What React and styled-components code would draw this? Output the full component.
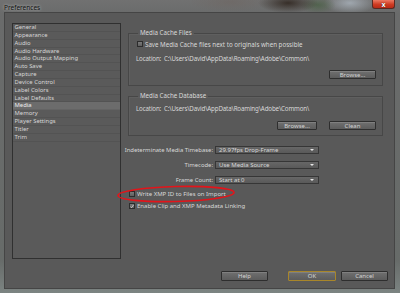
import React from "react";
import styled, { createGlobalStyle } from "styled-components";

const Global = createGlobalStyle`
  html, body { margin: 0; padding: 0; background: #6a6d6c; }
  body { font-family: "Noto Sans", "Open Sans", sans-serif; }
  * { box-sizing: border-box; }
`;

const Window = styled.div`
  position: relative;
  width: 400px;
  height: 293px;
  display: flex;
  flex-direction: column;
  overflow: hidden;
  background:
    radial-gradient(ellipse 30px 10px at 288px 3px, rgba(45, 35, 28, 0.85), transparent),
    radial-gradient(ellipse 18px 9px at 318px 5px, rgba(70, 95, 65, 0.7), transparent),
    radial-gradient(ellipse 26px 11px at 350px 3px, rgba(175, 185, 195, 0.75), transparent),
    radial-gradient(ellipse 40px 10px at 230px 2px, rgba(110, 100, 95, 0.5), transparent),
    linear-gradient(#717171, #6a6b6b 14px, #676b69 260px, #7c8482);
`;

const TitleBar = styled.div`
  height: 12px;
  display: flex;
  justify-content: space-between;
  align-items: flex-start;
  padding: 0 5px 0 4px;
`;

const Title = styled.span`
  font-size: 6.5px;
  line-height: 9px;
  padding-top: 3px;
  color: #111;
  text-shadow: 0 0 3px rgba(255, 255, 255, 0.7);
`;

const CloseButton = styled.div`
  width: 23px;
  height: 9px;
  display: flex;
  align-items: center;
  justify-content: center;
  border: 1px solid #5a2a22;
  border-top: none;
  border-radius: 0 0 3px 3px;
  background: linear-gradient(#ec7a63, #cf3b22 55%, #b82b17);
  color: #fff;
  font-size: 7px;
  font-weight: bold;
  line-height: 1;
  text-shadow: 0 0 1px #000;
`;

const Client = styled.div`
  flex: 1;
  margin: 0 5px 4px 4px;
  background: #595959;
  border: 1px solid #454545;
  padding: 10px 6px 7px 7px;
  display: flex;
  flex-direction: column;
  color: #d8d8d8;
  font-size: 6.2px;
`;

const Body = styled.div`
  height: 236px;
  display: flex;
  gap: 7px;
`;

const Sidebar = styled.div`
  width: 109px;
  height: 100%;
  border: 1px solid #303030;
  background: #5a5a5a;
`;

const Item = styled.div`
  height: 7.85px;
  line-height: 7.85px;
  padding-left: 1.5px;
  font-size: 5.9px;
  white-space: nowrap;
  border-bottom: 1px solid rgba(0, 0, 0, 0.07);
  background: ${(p) => (p.$selected ? "#6c6c6c" : "transparent")};
  color: ${(p) => (p.$selected ? "#eeeeee" : "#d6d6d6")};
`;

const Pane = styled.div`
  width: 255px;
  display: flex;
  flex-direction: column;
`;

const Group = styled.fieldset`
  margin: ${(p) => p.$top}px 0 0 0;
  border: 1px solid #474747;
  box-shadow: inset 1px 1px 0 rgba(255, 255, 255, 0.04);
  padding: ${(p) => p.$pad}px 6px ${(p) => p.$bottom}px 7px;
  min-width: 0;
  display: flex;
  flex-direction: column;
`;

const Legend = styled.legend`
  font-size: 6.2px;
  line-height: 8px;
  padding: 0 2px;
  margin-left: 2px;
  color: #d8d8d8;
`;

const CheckRow = styled.div`
  height: 8px;
  display: flex;
  align-items: center;
  gap: 2px;
  margin-top: ${(p) => p.$top || 0}px;
  margin-left: 1px;
  white-space: nowrap;
`;

const Box = styled.span`
  width: 6px;
  height: 6px;
  flex: none;
  border: 1px solid #2c2c2c;
  background: linear-gradient(#7a7a7a, #5f5f5f);
  display: flex;
  align-items: center;
  justify-content: center;
`;

const TextRow = styled.div`
  height: 8px;
  line-height: 8px;
  margin-top: ${(p) => p.$top}px;
  white-space: nowrap;
  letter-spacing: -0.15px;
`;

const ButtonRow = styled.div`
  display: flex;
  justify-content: flex-end;
  gap: ${(p) => p.$gap || 12}px;
  margin-top: ${(p) => p.$top}px;
`;

const Button = styled.div`
  width: ${(p) => p.$w}px;
  height: ${(p) => p.$h || 9}px;
  display: flex;
  align-items: center;
  justify-content: center;
  border: 1px solid ${(p) => (p.$default ? "#a8862a" : "#2e2e2e")};
  border-radius: 1px;
  background: linear-gradient(#707070, #5c5c5c);
  box-shadow: inset 0 1px 0 rgba(255, 255, 255, 0.12);
  color: #d4d4d4;
  font-size: 6px;
  white-space: nowrap;
`;

const Form = styled.div`
  margin-top: 10px;
  display: grid;
  grid-template-columns: 85px 104px;
  column-gap: 2px;
  row-gap: 7px;
`;

const Label = styled.div`
  height: 8px;
  line-height: 8px;
  display: flex;
  justify-content: flex-end;
  white-space: nowrap;
  font-size: 5.9px;
`;

const Select = styled.div`
  height: 8px;
  display: flex;
  align-items: center;
  justify-content: space-between;
  padding: 0 4px 0 3px;
  border: 1px solid #363636;
  background: linear-gradient(#676767, #595959);
  font-size: 6px;
  white-space: nowrap;
`;

const Arrow = styled.span`
  width: 0;
  height: 0;
  border-left: 2px solid transparent;
  border-right: 2px solid transparent;
  border-top: 2px solid #e8e8e8;
`;

const Checks = styled.div`
  margin-top: 6px;
  display: flex;
  flex-direction: column;
  gap: 4px;
  font-size: 6px;
`;

const Footer = styled.div`
  margin-top: 12px;
  height: 10px;
  display: flex;
  justify-content: flex-end;
`;

const Annotation = styled.svg`
  position: absolute;
  left: 116px;
  top: 185px;
  overflow: visible;
`;

const items = [
  "General",
  "Appearance",
  "Audio",
  "Audio Hardware",
  "Audio Output Mapping",
  "Auto Save",
  "Capture",
  "Device Control",
  "Label Colors",
  "Label Defaults",
  "Media",
  "Memory",
  "Player Settings",
  "Titler",
  "Trim",
];

function Check({ checked }) {
  return (
    <Box>
      {checked && (
        <svg width="5" height="5" viewBox="0 0 5 5">
          <path d="M0.6 2.6 L1.9 4 L4.4 0.6" fill="none" stroke="#e6e6e6" strokeWidth="0.9" />
        </svg>
      )}
    </Box>
  );
}

export default function App() {
  return (
    <Window>
      <Global />
      <TitleBar>
        <Title>Preferences</Title>
        <CloseButton>x</CloseButton>
      </TitleBar>
      <Client>
        <Body>
          <Sidebar>
            {items.map((it) => (
              <Item key={it} $selected={it === "Media"}>
                {it}
              </Item>
            ))}
          </Sidebar>
          <Pane>
            <Group $top={6} $pad={3} $bottom={6}>
              <Legend>Media Cache Files</Legend>
              <CheckRow>
                <Check />
                <span>Save Media Cache files next to originals when possible</span>
              </CheckRow>
              <TextRow $top={7}>Location:&nbsp; C:\Users\David\AppData\Roaming\Adobe\Common\</TextRow>
              <ButtonRow $top={7}>
                <Button $w={47}>Browse...</Button>
              </ButtonRow>
            </Group>
            <Group $top={6} $pad={5} $bottom={5}>
              <Legend>Media Cache Database</Legend>
              <TextRow $top={0}>Location:&nbsp; C:\Users\David\AppData\Roaming\Adobe\Common\</TextRow>
              <ButtonRow $top={8} $gap={12}>
                <Button $w={40}>Browse...</Button>
                <Button $w={47}>Clean</Button>
              </ButtonRow>
            </Group>
            <Form>
              <Label>Indeterminate Media Timebase:</Label>
              <Select>
                <span>29.97fps Drop-Frame</span>
                <Arrow />
              </Select>
              <Label>Timecode:</Label>
              <Select>
                <span>Use Media Source</span>
                <Arrow />
              </Select>
              <Label>Frame Count:</Label>
              <Select>
                <span>Start at 0</span>
                <Arrow />
              </Select>
            </Form>
            <Checks>
              <CheckRow>
                <Check />
                <span>Write XMP ID to Files on Import</span>
              </CheckRow>
              <CheckRow>
                <Check checked />
                <span>Enable Clip and XMP Metadata Linking</span>
              </CheckRow>
            </Checks>
          </Pane>
        </Body>
        <Footer>
          <Button $w={47} $h={10}>Help</Button>
          <Button $w={48} $h={10} $default style={{ marginLeft: 20 }}>OK</Button>
          <Button $w={47} $h={10} style={{ marginLeft: 5 }}>Cancel</Button>
        </Footer>
      </Client>
      <Annotation width="120" height="18" viewBox="0 0 120 18">
        <ellipse cx="60" cy="9" rx="58" ry="7.5" fill="none" stroke="#e3141a" strokeWidth="1.6" transform="rotate(-1.5 60 9)" />
      </Annotation>
    </Window>
  );
}
